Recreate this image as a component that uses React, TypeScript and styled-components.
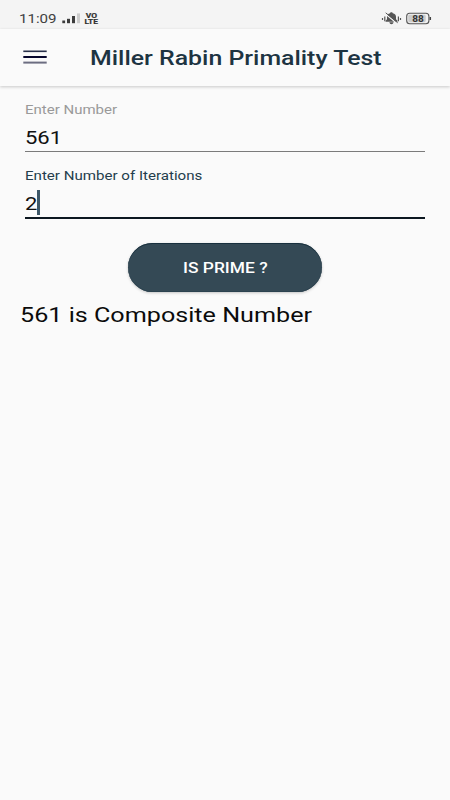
import React from "react";
import styled, { createGlobalStyle } from "styled-components";

const GlobalStyle = createGlobalStyle`
  * { box-sizing: border-box; }
  body { margin: 0; background: #fafafa; font-family: Roboto, "Liberation Sans", sans-serif; }
`;

const Screen = styled.div`
  width: 450px;
  height: 800px;
  overflow: hidden;
  background: #fafafa;
`;

const StatusBar = styled.header`
  display: flex;
  justify-content: space-between;
  height: 29px;
  padding: 8px 18px 0 19px;
  background: #f4f4f4;
`;

const StatusGroup = styled.div`
  display: flex;
  height: 21px;
`;

const Text = styled.span<{ $size: number; $line: number; $stretch: number; $color: string; $weight?: number }>`
  display: block;
  white-space: pre;
  font-size: ${(p) => p.$size}px;
  line-height: ${(p) => p.$line}px;
  font-weight: ${(p) => p.$weight ?? 400};
  color: ${(p) => p.$color};
  transform: scaleX(${(p) => p.$stretch});
  transform-origin: left center;
`;

const Clock = styled.div`
  width: 43px;
`;

const AppBar = styled.div`
  display: flex;
  height: 57px;
  padding: 15px 0 0 23px;
  background: #fafafa;
  box-shadow: 0 1px 3px rgba(0, 0, 0, 0.2);
`;

const MenuButton = styled.button`
  display: block;
  width: 67px;
  height: 26px;
  padding: 0;
  border: 0;
  background: none;
  text-align: left;
`;

const Form = styled.main`
  display: flex;
  flex-direction: column;
  padding: 15px 25px 0;
`;

const Field = styled.label<{ $active?: boolean }>`
  display: flex;
  flex-direction: column;
  height: ${(p) => (p.$active ? 52 : 51)}px;
  border-bottom: ${(p) => (p.$active ? "2px solid #0c1720" : "1px solid #7b7b7b")};
  margin-bottom: ${(p) => (p.$active ? 24 : 15)}px;
`;

const Value = styled.div`
  display: flex;
  height: 26px;
  margin-top: 6px;
`;

const Digits = styled.div<{ $width: number }>`
  width: ${(p) => p.$width}px;
`;

const Caret = styled.i`
  width: 3px;
  height: 25px;
  margin-top: -1px;
  background: #3e5868;
`;

const PrimeButton = styled.button`
  display: flex;
  align-self: center;
  width: 194px;
  height: 49px;
  padding: 16px 0 0 55px;
  border: 0;
  border-radius: 25px;
  background: #344955;
  box-shadow: inset 0 1px 0 #18303e, inset 0 -1px 0 #2b424f, 0 1px 3px rgba(0, 0, 0, 0.22);
  font-family: inherit;
`;

const Result = styled.div`
  margin: 10px 0 0 -5px;
`;

export default function App() {
  return (
    <>
      <GlobalStyle />
      <Screen>
        <StatusBar>
          <StatusGroup>
            <Clock>
              <Text $size={13} $line={21} $stretch={1.16} $color="#414141">11:09</Text>
            </Clock>
            <svg width="40" height="21" viewBox="62 8 40 21">
              <rect x="62.3" y="20.5" width="2.8" height="2.7" fill="#3c3c3c" />
              <rect x="67" y="18.8" width="3" height="4.4" fill="#3c3c3c" />
              <rect x="72" y="16" width="3" height="7.2" fill="#3c3c3c" />
              <rect x="77" y="13.4" width="3" height="9.8" fill="#ccc" />
              <g fill="#303030" stroke="#303030" strokeWidth="0.2" fontFamily="Roboto, sans-serif" fontWeight="700" fontSize="7.6">
                <text x="85.8" y="17.8" textLength="11.3" lengthAdjust="spacingAndGlyphs">VO</text>
                <text x="84.5" y="24.1" textLength="13.5" lengthAdjust="spacingAndGlyphs">LTE</text>
              </g>
            </svg>
          </StatusGroup>
          <svg width="52" height="21" viewBox="380 8 52 21">
            <path d="M385.6 21.8v-1l1.4-1.6v-2.4c0-2 1.1-3.2 3-3.6.2-1.2 2.6-1.2 2.8 0 2.1.4 3.2 1.8 3.2 3.6v2.4l1.5 1.6v1zM389.3 22.2h4.3c-.5 2.6-3.8 2.6-4.3 0z" fill="#555" />
            <path d="M385.6 14l12 9.9" stroke="#f4f4f4" strokeWidth="1.3" />
            <path d="M385.7 12.8l12 10" stroke="#555" strokeWidth="1" />
            <path d="M382.5 18v2M384.8 16.6v4.6M398.4 16.6v4.6M400.5 18v2" stroke="#555" strokeWidth="1.2" />
            <rect x="406.7" y="13.3" width="22.2" height="10.4" rx="3" fill="#f2f2f2" stroke="#555" strokeWidth="1.1" />
            <rect x="408.2" y="14.8" width="17.5" height="7.4" rx="1.4" fill="#ccc" />
            <path d="M430.3 17v3" stroke="#444" strokeWidth="1.5" />
            <text x="412.2" y="21.6" fill="#333" fontFamily="Roboto, sans-serif" fontWeight="700" fontSize="8.4" textLength="11.6" lengthAdjust="spacingAndGlyphs">88</text>
          </svg>
        </StatusBar>
        <AppBar>
          <MenuButton aria-label="Menu">
            <svg width="25" height="26" viewBox="23 44 25 26">
              <path d="M23.3 51.3h23.4" stroke="#29304b" strokeWidth="1.6" />
              <path d="M23.3 57h23.4" stroke="#07072d" strokeWidth="2" />
              <path d="M23.3 62.6h23.4" stroke="#6c6d81" strokeWidth="2" />
            </svg>
          </MenuButton>
          <Text $size={20} $line={29} $stretch={1.243} $color="#1d3442" $weight={500}>Miller Rabin Primality Test</Text>
        </AppBar>
        <Form>
          <Field>
            <Text $size={12.5} $line={18} $stretch={1.2} $color="#999">Enter Number</Text>
            <Value>
              <Text $size={18.5} $line={26} $stretch={1.19} $color="#111">561</Text>
            </Value>
          </Field>
          <Field $active>
            <Text $size={12.5} $line={18} $stretch={1.207} $color="#243d4c">Enter Number of Iterations</Text>
            <Value>
              <Digits $width={12}>
                <Text $size={18.5} $line={26} $stretch={1.19} $color="#111">2</Text>
              </Digits>
              <Caret />
            </Value>
          </Field>
          <PrimeButton>
            <Text $size={14.5} $line={19} $stretch={1.2} $color="#fff" $weight={500}>IS PRIME ?</Text>
          </PrimeButton>
          <Result>
            <Text $size={20.5} $line={27} $stretch={1.227} $color="#0b0b0b">561 is Composite Number</Text>
          </Result>
        </Form>
      </Screen>
    </>
  );
}
